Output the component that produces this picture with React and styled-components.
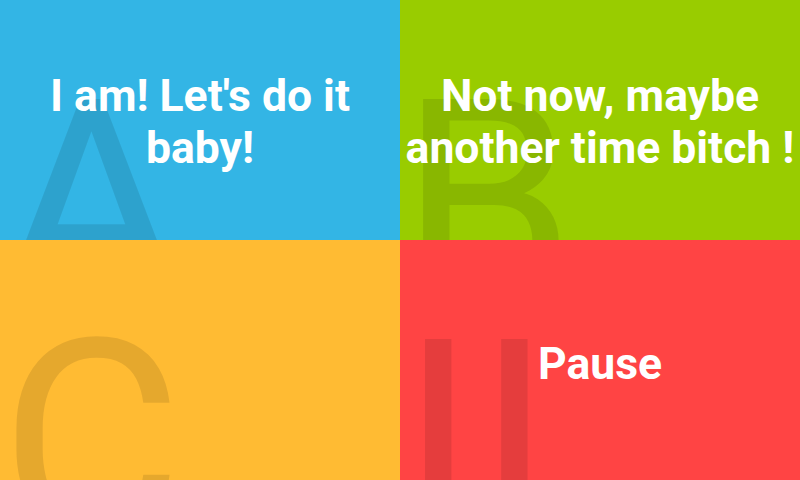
import React from "react";
import styled, { createGlobalStyle } from "styled-components";

const Global = createGlobalStyle`
  html, body { margin: 0; padding: 0; }
  body { font-family: Roboto, "Liberation Sans", sans-serif; overflow: hidden; }
`;

const Board = styled.div`
  display: grid;
  grid-template-columns: 1fr 1fr;
  grid-template-rows: 1fr 1fr;
  width: 800px;
  height: 480px;
`;

const Panel = styled.div`
  position: relative;
  overflow: hidden;
  display: flex;
  align-items: center;
  justify-content: center;
  background: ${(p) => p.$bg};
`;

const Glyph = styled.span`
  position: absolute;
  left: 0;
  top: 62px;
  font-family: Roboto, sans-serif;
  font-weight: 400;
  font-size: 280px;
  line-height: 280px;
  color: rgba(0, 0, 0, 0.1);
  user-select: none;
`;

const Message = styled.div`
  position: relative;
  color: #ffffff;
  font-family: Roboto, sans-serif;
  font-weight: 700;
  font-size: 44.5px;
  line-height: 52px;
  text-align: center;
  padding-top: ${(p) => (p.$single ? "7px" : "3px")};
`;

const panels = [
  { bg: "#33B5E5", glyph: "A", text: ["I am! Let's do it", "baby!"] },
  { bg: "#99CC00", glyph: "B", text: ["Not now, maybe", "another time bitch !"] },
  { bg: "#FFBB33", glyph: "C", text: [] },
  { bg: "#FF4444", glyph: "II", text: ["Pause"] },
];

export default function App() {
  return (
    <>
      <Global />
      <Board>
        {panels.map((p) => (
          <Panel key={p.glyph} $bg={p.bg}>
            <Glyph>{p.glyph}</Glyph>
            {p.text.length > 0 && (
              <Message $single={p.text.length === 1}>
                {p.text.map((line, i) => (
                  <div key={i}>{line}</div>
                ))}
              </Message>
            )}
          </Panel>
        ))}
      </Board>
    </>
  );
}
